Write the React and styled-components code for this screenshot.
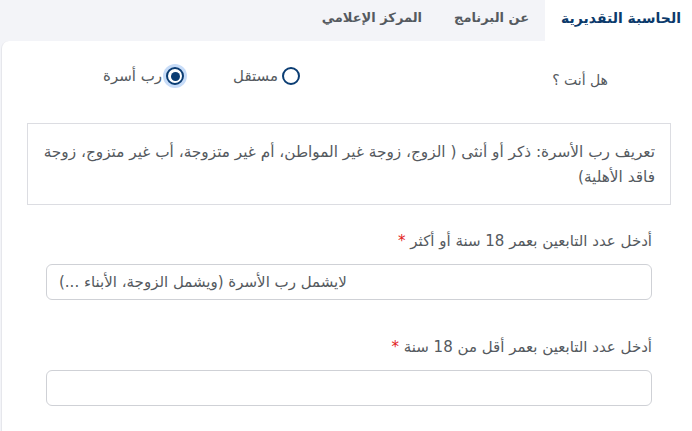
import React from 'react'
import styled, { createGlobalStyle } from 'styled-components'

const GlobalStyle = createGlobalStyle`
  html, body {
    margin: 0;
    padding: 0;
    background: #f3f4f8;
  }
  body {
    font-family: "DejaVu Sans", "Noto Sans", sans-serif;
    direction: rtl;
    overflow: hidden;
  }
`

const Page = styled.div`
  width: 692px;
  min-height: 431px;
  display: flex;
  flex-direction: column;
`

const Tabs = styled.div`
  display: flex;
  flex-shrink: 0;
  height: 41px;
`

const Tab = styled.div`
  display: flex;
  align-items: center;
  padding: 0 ${p => (p.active ? '11px' : '16px')} 6px 16px;
  font-size: ${p => (p.active ? '14px' : '13px')};
  font-weight: bold;
  color: ${p => (p.active ? '#0c3a6b' : '#555a60')};
  background: ${p => (p.active ? '#fff' : 'transparent')};
`

const Panel = styled.div`
  flex: 1;
  margin-left: 1px;
  background: #fff;
  border-left: 1px solid #e6e7ec;
  border-top-left-radius: 8px;
  padding: 0 21px 0 25px;
`

const QuestionRow = styled.div`
  display: flex;
  align-items: center;
  height: 72px;
  padding: 0 63px 10px 0;
`

const Question = styled.div`
  width: 308px;
  font-size: 14px;
  color: #555a60;
  padding-top: 6px;
`

const Radios = styled.div`
  display: flex;
  gap: 49px;
  margin-bottom: 2px;
`

const RadioOption = styled.label`
  display: flex;
  align-items: center;
  gap: 4px;
  font-size: 15px;
  color: #555a60;
`

const RadioDot = styled.span`
  box-sizing: border-box;
  width: 18px;
  height: 18px;
  border-radius: 50%;
  border: 2px solid #0b3d73;
  display: flex;
  align-items: center;
  justify-content: center;
  background: #fff;
  box-shadow: ${p => (p.checked ? '0 0 0 3px #c7dcf8' : 'none')};

  &::after {
    content: '';
    display: ${p => (p.checked ? 'block' : 'none')};
    width: 9px;
    height: 9px;
    border-radius: 50%;
    background: #0b3d73;
  }
`

const InfoBox = styled.div`
  border: 1px solid #dcdde2;
  padding: 16px 15px 14px 15px;
  font-size: 15.3px;
  line-height: 25px;
  color: #555a60;
  margin-bottom: 27px;
`

const Field = styled.div`
  padding: 0 19px;
  margin-bottom: 38px;
`

const Label = styled.div`
  font-size: 15px;
  color: #555a60;
  margin-bottom: 14px;

  span {
    color: #e2231a;
  }
`

const Input = styled.div`
  box-sizing: border-box;
  height: 36px;
  border: 1px solid #cfd1d6;
  border-radius: 6px;
  padding: 0 12px;
  display: flex;
  align-items: center;
  justify-content: flex-end;
  font-size: 15px;
  color: #555a60;
`

const App = () => {
  return (
    <Page>
      <GlobalStyle />
      <Tabs>
        <Tab active>الحاسبة التقديرية</Tab>
        <Tab>عن البرنامج</Tab>
        <Tab>المركز الإعلامي</Tab>
      </Tabs>
      <Panel>
        <QuestionRow>
          <Question>هل أنت ؟</Question>
          <Radios>
            <RadioOption>
              <RadioDot />
              مستقل
            </RadioOption>
            <RadioOption>
              <RadioDot checked />
              رب أسرة
            </RadioOption>
          </Radios>
        </QuestionRow>
        <InfoBox>
          تعريف رب الأسرة: ذكر أو أنثى ( الزوج، زوجة غير المواطن، أم غير متزوجة، أب غير متزوج، زوجة فاقد الأهلية)
        </InfoBox>
        <Field>
          <Label>أدخل عدد التابعين بعمر 18 سنة أو أكثر <span>*</span></Label>
          <Input>لايشمل رب الأسرة (ويشمل الزوجة، الأبناء ...)</Input>
        </Field>
        <Field>
          <Label>أدخل عدد التابعين بعمر أقل من 18 سنة <span>*</span></Label>
          <Input />
        </Field>
      </Panel>
    </Page>
  )
}

export default App
